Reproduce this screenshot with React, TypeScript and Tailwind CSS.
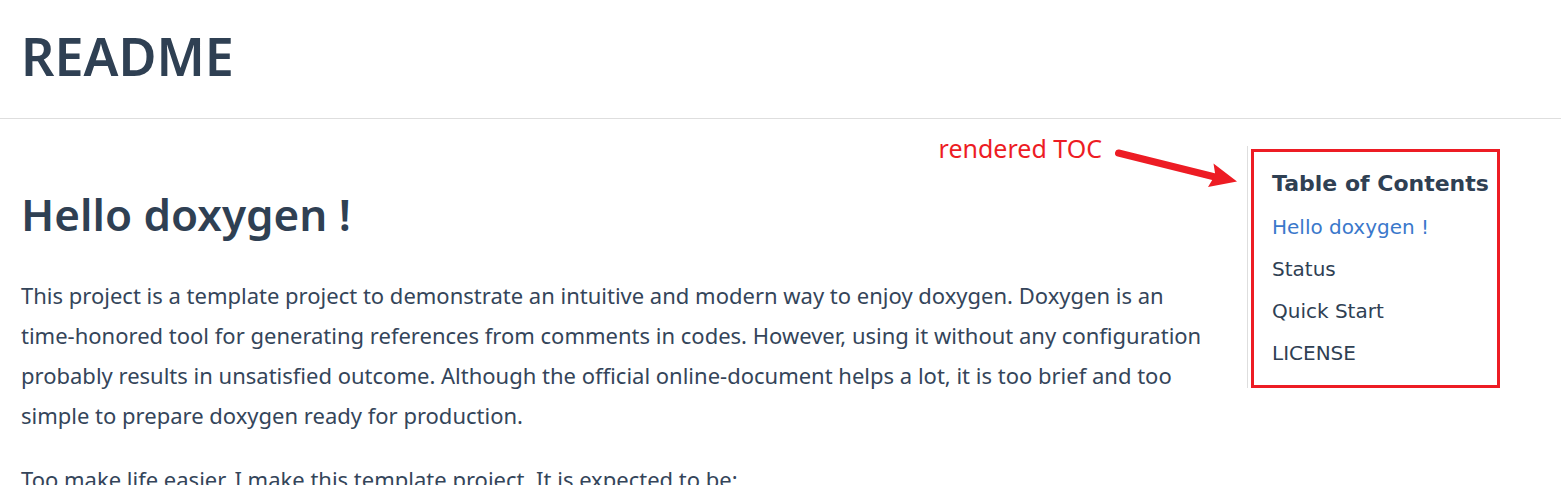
const sections = [
  { id: 'hello-doxygen', label: 'Hello doxygen !', active: true },
  { id: 'status', label: 'Status', active: false },
  { id: 'quick-start', label: 'Quick Start', active: false },
  { id: 'license', label: 'LICENSE', active: false },
];

function Callout() {
  return (
    <div className="absolute top-[-18px] right-full mr-[10px] flex items-start text-[#ed1c24]">
      <span className="text-[25px] leading-[40px] whitespace-nowrap">rendered TOC</span>
      <svg className="mt-[18px] ml-3 shrink-0" width="124" height="46" viewBox="0 0 124 46" aria-hidden="true">
        <path d="M4.5 7 99 30.5" fill="none" stroke="currentColor" strokeWidth="7" strokeLinecap="round" />
        <path d="M99.5 17.5 123 35.5 94 41 98.5 33.5 101 27Z" fill="currentColor" />
      </svg>
    </div>
  );
}

function TableOfContents() {
  return (
    <aside className="relative mt-[27px] mr-[61px] w-[253px] shrink-0 border-l border-[#dedede] pt-[3px] pl-[3px]">
      <nav
        aria-labelledby="toc-title"
        className="border-3 border-[#ed1c24] py-[11px] pl-[18px] font-['DejaVu_Sans',sans-serif] text-[20px] leading-[42px]"
      >
        <h3 id="toc-title" className="text-[22px] font-bold whitespace-nowrap">Table of Contents</h3>
        <ul className="mt-px">
          {sections.map((section) => (
            <li key={section.id}>
              <a href={`#${section.id}`} className={section.active ? 'text-[#3a78cb]' : ''}>
                {section.label}
              </a>
            </li>
          ))}
        </ul>
      </nav>
      <Callout />
    </aside>
  );
}

export default function App() {
  return (
    <div className="h-screen overflow-hidden bg-white font-['Noto_Sans',sans-serif] text-[#2f4053]">
      <header className="border-b border-[#dedede] px-[21px] pt-[21px] pb-[27px]">
        <h1 className="text-[52px] leading-[70px] font-semibold">README</h1>
      </header>
      <div className="flex items-start">
        <main className="min-w-0 flex-1 pt-[60px] pr-[40px] pl-[21px]">
          <h2 id="hello-doxygen" className="text-[44px] leading-[70px] font-semibold">Hello doxygen !</h2>
          <div className="mt-[26px] flex flex-col gap-6 text-[22px] leading-[40px] text-[#34455a]">
            <p>
              This project is a template project to demonstrate an intuitive and modern way to enjoy doxygen. Doxygen is
              an time-honored tool for generating references from comments in codes. However, using it without any
              configuration probably results in unsatisfied outcome. Although the official online-document helps a lot,
              it is too brief and too simple to prepare doxygen ready for production.
            </p>
            <p>Too make life easier, I make this template project. It is expected to be:</p>
          </div>
        </main>
        <TableOfContents />
      </div>
    </div>
  );
}
